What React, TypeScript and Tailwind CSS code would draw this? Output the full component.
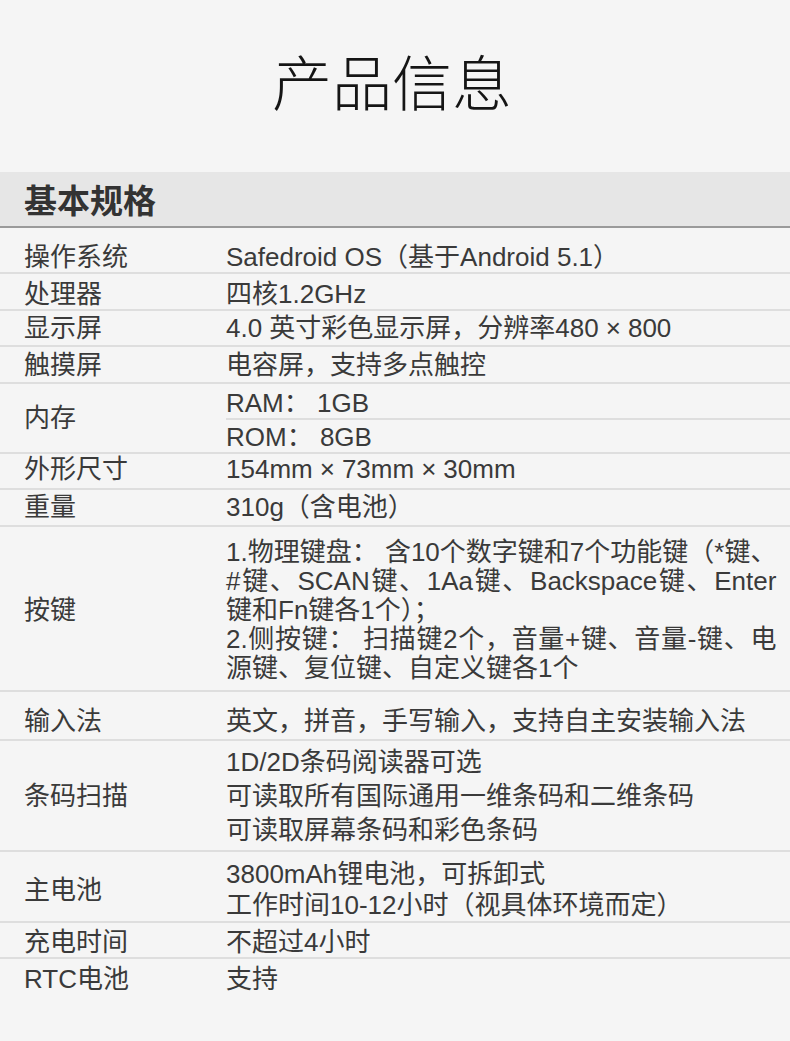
import React from 'react';

type Spec = {
  label: string;
  lines: React.ReactNode;
  pad: string;
  last?: boolean;
};

const JLine = ({ children }: { children: React.ReactNode }) => (
  <div className="mr-[15px] whitespace-nowrap [text-align-last:justify]">{children}</div>
);

// wide multiplication sign, as in the reference
const X = () => <span className="mx-[7px]">×</span>;

const specs: Spec[] = [
  { label: '操作系统', lines: 'Safedroid OS（基于Android 5.1）', pad: 'pt-[15px] pb-0' },
  { label: '处理器', lines: '四核1.2GHz', pad: 'pt-[6px] pb-0' },
  {
    label: '显示屏',
    lines: (
      <>
        4.0 英寸彩色显示屏，分辨率480<X />800
      </>
    ),
    pad: 'pt-[3px] pb-[2px]',
  },
  { label: '触摸屏', lines: '电容屏，支持多点触控', pad: 'pt-[4px] pb-[2px]' },
  {
    label: '内存',
    lines: (
      <>
        <div className="border-b-2 border-[#dedede] pt-[5px]">RAM： 1GB</div>
        <div className="pt-[3px]">ROM： 8GB</div>
      </>
    ),
    pad: 'pt-0 pb-0',
  },
  {
    label: '外形尺寸',
    lines: (
      <>
        154mm<X />73mm<X />30mm
      </>
    ),
    pad: 'pt-[1px] pb-[4px]',
  },
  { label: '重量', lines: '310g（含电池）', pad: 'pt-[3px] pb-[3px]' },
  {
    label: '按键',
    lines: (
      <>
        <JLine>1.物理键盘： 含10个数字键和7个功能键（*键、</JLine>
        <JLine>#键、SCAN键、1Aa键、Backspace键、Enter</JLine>
        <div>键和Fn键各1个）；</div>
        <JLine>2.侧按键： 扫描键2个，音量+键、音量-键、电</JLine>
        <div>源键、复位键、自定义键各1个</div>
      </>
    ),
    pad: 'pt-[11px] pb-[7px]',
  },
  { label: '输入法', lines: '英文，拼音，手写输入，支持自主安装输入法', pad: 'pt-[15px] pb-[3px]' },
  {
    label: '条码扫描',
    lines: (
      <div className="leading-[34px]">
        <div>1D/2D条码阅读器可选</div>
        <div>可读取所有国际通用一维条码和二维条码</div>
        <div>可读取屏幕条码和彩色条码</div>
      </div>
    ),
    pad: 'pt-[4px] pb-[3px]',
  },
  {
    label: '主电池',
    lines: (
      <div className="leading-[31px]">
        <div>3800mAh锂电池，可拆卸式</div>
        <div>工作时间10-12小时（视具体环境而定）</div>
      </div>
    ),
    pad: 'pt-[7px] pb-0',
  },
  { label: '充电时间', lines: '不超过4小时', pad: 'pt-[5px] pb-0' },
  { label: 'RTC电池', lines: '支持', pad: 'pt-[6px] pb-0', last: true },
];

export default function App() {
  return (
    <div
      lang="zh-CN"
      className="min-h-[1041px] w-[790px] bg-[#f5f5f5] text-[#3a3a3a] [font-family:'Liberation_Sans','Noto_Sans_CJK_SC',sans-serif]"
    >
      {/* Title */}
      <div className="flex h-[172px] justify-center pt-[50px]">
        <h1 className="-ml-[6px] text-[60px] font-light leading-none text-[#151515] [font-family:'Noto_Sans_CJK_SC',sans-serif]">
          产品信息
        </h1>
      </div>

      {/* Section header */}
      <div className="flex h-[56px] items-center border-b-2 border-[#9a9a9a] bg-[#e6e6e6] pl-[24px]">
        <h2 className="text-[33px] font-bold leading-none text-[#333333] [font-family:'Noto_Sans_CJK_SC',sans-serif]">
          基本规格
        </h2>
      </div>

      {/* Spec rows */}
      <div className="text-[26px] leading-[29px]">
        {specs.map((s) => (
          <div
            key={s.label}
            className={`flex ${s.last ? '' : 'border-b-2 border-[#dedede]'}`}
          >
            <div className={`flex w-[226px] shrink-0 items-center pl-[24px] ${s.pad}`}>{s.label}</div>
            <div className={`flex-1 ${s.pad}`}>{s.lines}</div>
          </div>
        ))}
      </div>
    </div>
  );
}
